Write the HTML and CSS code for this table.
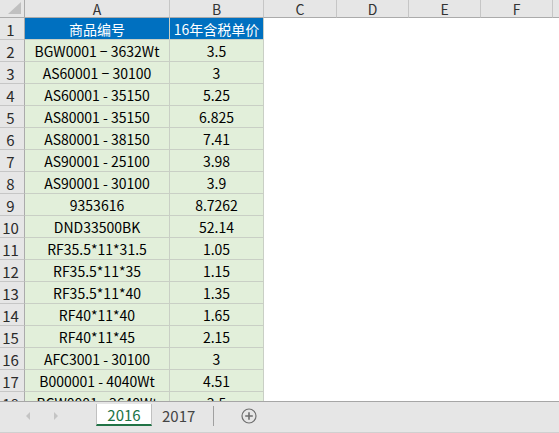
FILE: index.html
```html
<!DOCTYPE html>
<html lang="zh-CN">
<head>
<meta charset="utf-8">
<title>Sheet</title>
<link rel="stylesheet" href="styles.css">
</head>
<body>
<div class="app">
  <div class="sheet">
    <div class="grid">
      <div class="corner"><span class="tri"></span></div>
      <div class="colh">A</div>
      <div class="colh">B</div>
      <div class="colh">C</div>
      <div class="colh">D</div>
      <div class="colh">E</div>
      <div class="colh">F</div>
      <div class="colh last"></div>

      <div class="rowh">1</div><div class="cell head">商品编号</div><div class="cell head">16年含税单价</div><div class="empty"></div><div class="empty"></div><div class="empty"></div><div class="empty"></div><div class="empty"></div>
      <div class="rowh">2</div><div class="cell">BGW0001 − 3632Wt</div><div class="cell">3.5</div><div class="empty"></div><div class="empty"></div><div class="empty"></div><div class="empty"></div><div class="empty"></div>
      <div class="rowh">3</div><div class="cell">AS60001 − 30100</div><div class="cell">3</div><div class="empty"></div><div class="empty"></div><div class="empty"></div><div class="empty"></div><div class="empty"></div>
      <div class="rowh">4</div><div class="cell">AS60001 - 35150</div><div class="cell">5.25</div><div class="empty"></div><div class="empty"></div><div class="empty"></div><div class="empty"></div><div class="empty"></div>
      <div class="rowh">5</div><div class="cell">AS80001 - 35150</div><div class="cell">6.825</div><div class="empty"></div><div class="empty"></div><div class="empty"></div><div class="empty"></div><div class="empty"></div>
      <div class="rowh">6</div><div class="cell">AS80001 - 38150</div><div class="cell">7.41</div><div class="empty"></div><div class="empty"></div><div class="empty"></div><div class="empty"></div><div class="empty"></div>
      <div class="rowh">7</div><div class="cell">AS90001 - 25100</div><div class="cell">3.98</div><div class="empty"></div><div class="empty"></div><div class="empty"></div><div class="empty"></div><div class="empty"></div>
      <div class="rowh">8</div><div class="cell">AS90001 - 30100</div><div class="cell">3.9</div><div class="empty"></div><div class="empty"></div><div class="empty"></div><div class="empty"></div><div class="empty"></div>
      <div class="rowh">9</div><div class="cell">9353616</div><div class="cell">8.7262</div><div class="empty"></div><div class="empty"></div><div class="empty"></div><div class="empty"></div><div class="empty"></div>
      <div class="rowh">10</div><div class="cell">DND33500BK</div><div class="cell">52.14</div><div class="empty"></div><div class="empty"></div><div class="empty"></div><div class="empty"></div><div class="empty"></div>
      <div class="rowh">11</div><div class="cell">RF35.5*11*31.5</div><div class="cell">1.05</div><div class="empty"></div><div class="empty"></div><div class="empty"></div><div class="empty"></div><div class="empty"></div>
      <div class="rowh">12</div><div class="cell">RF35.5*11*35</div><div class="cell">1.15</div><div class="empty"></div><div class="empty"></div><div class="empty"></div><div class="empty"></div><div class="empty"></div>
      <div class="rowh">13</div><div class="cell">RF35.5*11*40</div><div class="cell">1.35</div><div class="empty"></div><div class="empty"></div><div class="empty"></div><div class="empty"></div><div class="empty"></div>
      <div class="rowh">14</div><div class="cell">RF40*11*40</div><div class="cell">1.65</div><div class="empty"></div><div class="empty"></div><div class="empty"></div><div class="empty"></div><div class="empty"></div>
      <div class="rowh">15</div><div class="cell">RF40*11*45</div><div class="cell">2.15</div><div class="empty"></div><div class="empty"></div><div class="empty"></div><div class="empty"></div><div class="empty"></div>
      <div class="rowh">16</div><div class="cell">AFC3001 - 30100</div><div class="cell">3</div><div class="empty"></div><div class="empty"></div><div class="empty"></div><div class="empty"></div><div class="empty"></div>
      <div class="rowh">17</div><div class="cell">B000001 - 4040Wt</div><div class="cell">4.51</div><div class="empty"></div><div class="empty"></div><div class="empty"></div><div class="empty"></div><div class="empty"></div>
      <div class="rowh">18</div><div class="cell">BCW0001 - 3640Wt</div><div class="cell">3.5</div><div class="empty"></div><div class="empty"></div><div class="empty"></div><div class="empty"></div><div class="empty"></div>
    </div>
  </div>
  <div class="tabbar">
    <div class="navs">
      <svg class="nav" width="6" height="8" viewBox="0 0 6 8"><path d="M5 0 L1 4 L5 8 Z" fill="#c4c4c4"/></svg>
      <svg class="nav" width="6" height="8" viewBox="0 0 6 8"><path d="M1 0 L5 4 L1 8 Z" fill="#c4c4c4"/></svg>
    </div>
    <div class="tab active">2016</div>
    <div class="tab">2017</div>
    <div class="sep"></div>
    <svg class="add" width="16" height="16" viewBox="0 0 16 16"><circle cx="8" cy="8" r="7" fill="none" stroke="#6e6e6e" stroke-width="1.2"/><path d="M8 4.2 V11.8 M4.2 8 H11.8" stroke="#6e6e6e" stroke-width="1.6"/></svg>
  </div>
</div>
</body>
</html>
```
FILE: styles.css
```css
html, body { margin: 0; padding: 0; background: #fff; }
body { font-family: "Noto Sans CJK SC", "Noto Sans", sans-serif; }
.app { width: 559px; height: 433px; display: flex; flex-direction: column; overflow: hidden; }
.sheet { height: 401px; overflow: hidden; flex: none; }
.grid {
  display: grid;
  grid-template-columns: 25px 145px 94px 73px 72px 72px 72px 1fr;
  grid-template-rows: 18px repeat(18, 22px);
  width: 559px;
}
.corner { background: #e6e6e6; border-right: 1px solid #ababab; border-bottom: 1px solid #ababab; position: relative; box-sizing: border-box; }
.tri { position: absolute; right: 3px; bottom: 3px; width: 0; height: 0; border-left: 13px solid transparent; border-bottom: 12px solid #c0c0c0; }
.colh { background: #e6e6e6; border-right: 1px solid #c6c6c6; border-bottom: 1px solid #ababab; box-sizing: border-box; display: flex; align-items: center; justify-content: center; font-size: 14px; color: #333; line-height: 1; padding-top: 1px; }
.colh.last { border-right: none; }
.rowh { background: #e6e6e6; border-right: 1px solid #ababab; border-bottom: 1px solid #c6c6c6; box-sizing: border-box; display: flex; align-items: flex-end; justify-content: center; font-size: 15px; color: #2b2b2b; line-height: 1; padding: 0 3px 2px 0; }
.cell { background: #e2efda; border-right: 1px solid #c9cfc5; border-bottom: 1px solid #c9cfc5; box-sizing: border-box; display: flex; align-items: flex-end; justify-content: center; font-size: 14px; color: #000; line-height: 1; padding-bottom: 3px; white-space: nowrap; overflow: hidden; }
.cell.head { background: #0070c0; color: #fff; border-color: #c9cfc5; }
.empty { background: #fff; }
.tabbar { flex: 1; background: #e6e6e6; border-top: 1px solid #a6a6a6; border-bottom: 1px solid #d0d0d0; display: flex; align-items: flex-start; font-family: "Noto Sans CJK SC", sans-serif; }
.navs { width: 96px; display: flex; gap: 22px; padding: 10px 0 0 25px; box-sizing: border-box; }
.tab { height: 22px; padding: 0 10px; display: flex; align-items: center; font-size: 15px; color: #444; margin-top: 2px; }
.tab.active { background: #fff; color: #217346; border-bottom: 2px solid #217346; border-left: 1px solid #c0c0c0; border-right: 1px solid #c0c0c0; width: 56px; box-sizing: border-box; justify-content: center; padding: 0; margin-top: 2px; }
.sep { width: 1px; height: 20px; background: #a0a0a0; margin: 4px 0 0 8px; }
.add { margin: 6px 0 0 27px; }
```
